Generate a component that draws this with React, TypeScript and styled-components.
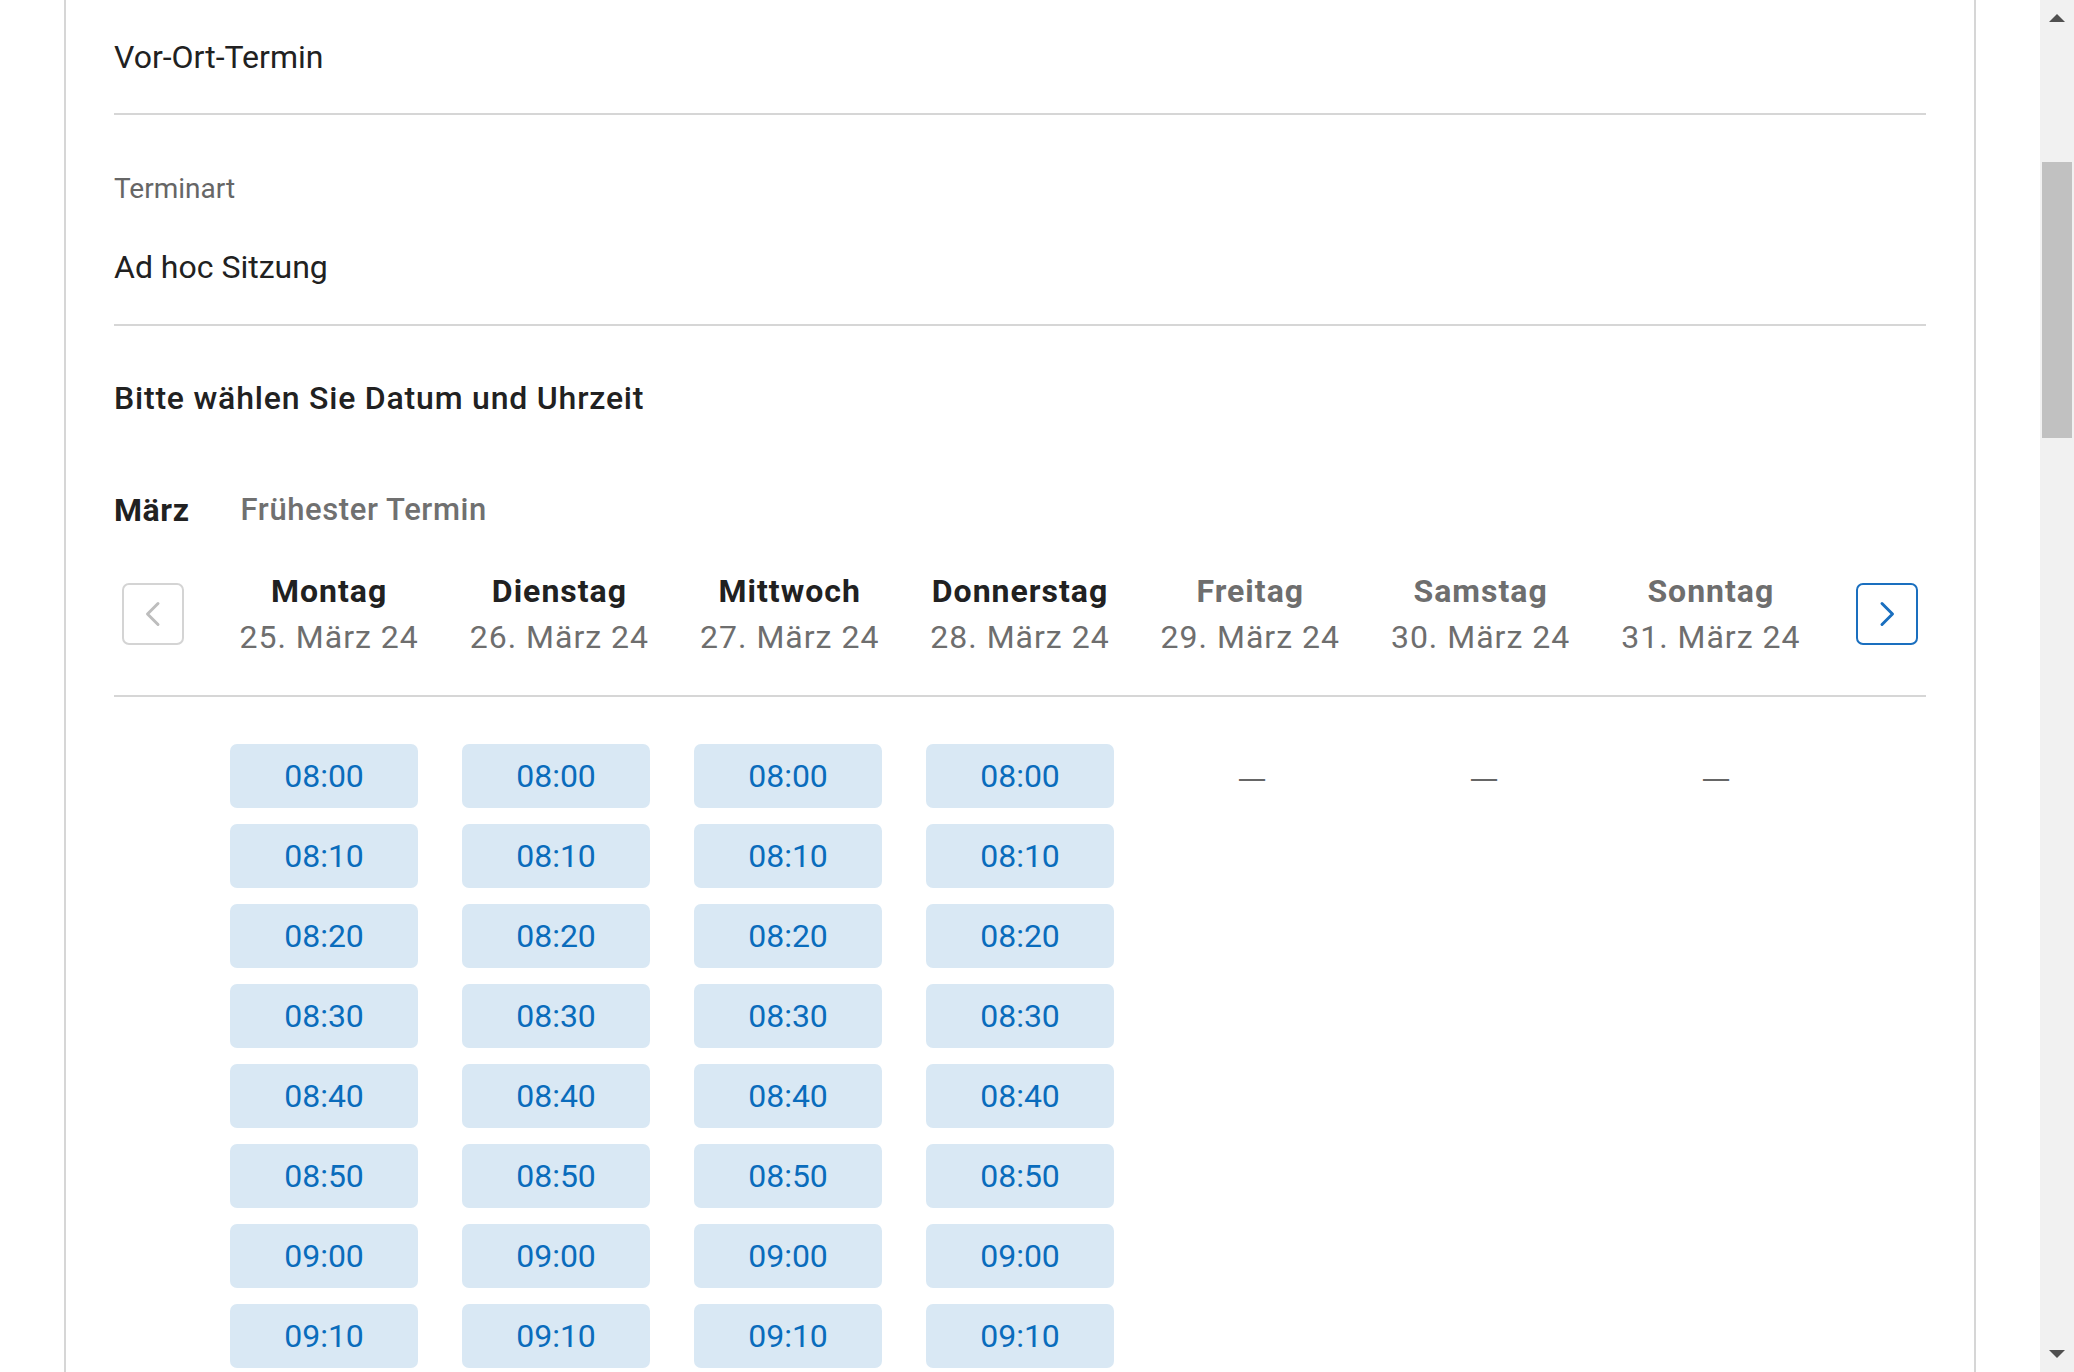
import React from 'react';
import styled, { createGlobalStyle } from 'styled-components';

const GlobalStyle = createGlobalStyle`
  html, body {
    margin: 0;
    padding: 0;
    height: 100%;
    overflow: hidden;
    background: #fff;
  }
  body {
    font-family: Roboto, "Liberation Sans", Arial, sans-serif;
    color: #212121;
  }
`;

const Page = styled.div`
  display: flex;
  height: 100vh;
  overflow: hidden;
`;

const Main = styled.div`
  flex: 1;
  overflow: hidden;
`;

const Card = styled.div`
  margin: 0 64px;
  padding: 0 48px 80px;
  border-left: 2px solid #d6d6d6;
  border-right: 2px solid #d6d6d6;
  min-height: 100vh;
`;

const Field = styled.div<{ $top: number; $bottom: number }>`
  padding-top: ${(p) => p.$top}px;
  padding-bottom: ${(p) => p.$bottom}px;
  border-bottom: 2px solid #d6d6d6;
`;

const FieldLabel = styled.div`
  font-size: 28px;
  line-height: 36px;
  color: #666;
  margin-bottom: 37px;
`;

const FieldValue = styled.div`
  font-size: 32px;
  line-height: 46px;
  color: #212121;
`;

const Heading = styled.h2`
  margin: 51px 0 0;
  font-size: 32px;
  line-height: 42px;
  font-weight: 500;
  letter-spacing: 0.8px;
  color: #212121;
`;

const Tabs = styled.div`
  display: flex;
  gap: 51px;
  margin-top: 68px;
`;

const Tab = styled.div<{ $active?: boolean }>`
  font-size: ${(p) => (p.$active ? 32 : 31)}px;
  line-height: 46px;
  letter-spacing: 0.6px;
  font-weight: ${(p) => (p.$active ? 700 : 500)};
  color: ${(p) => (p.$active ? '#212121' : '#707070')};
`;

const WeekHeader = styled.div`
  display: flex;
  align-items: center;
  margin-top: 35px;
  padding: 0 8px 35px;
  border-bottom: 2px solid #d6d6d6;
`;

const NavButton = styled.button<{ $active?: boolean }>`
  width: 62px;
  height: 62px;
  flex: 0 0 62px;
  display: flex;
  align-items: center;
  justify-content: center;
  padding: 0;
  background: #fff;
  border: 2px solid ${(p) => (p.$active ? '#1a6fbf' : '#d4d4d4')};
  border-radius: 7px;
  color: ${(p) => (p.$active ? '#1a6fbf' : '#bdbdbd')};
  cursor: pointer;
`;

const Days = styled.div`
  flex: 1;
  display: flex;
  margin: 0 30px;
`;

const Day = styled.div`
  flex: 1;
  text-align: center;
  font-size: 32px;
  line-height: 46px;
  letter-spacing: 1px;
`;

const DayName = styled.div<{ $muted?: boolean }>`
  font-weight: 700;
  color: ${(p) => (p.$muted ? '#6e6e6e' : '#212121')};
`;

const DayDate = styled.div`
  color: #6e6e6e;
`;

const SlotGrid = styled.div`
  display: grid;
  grid-template-columns: repeat(7, 1fr);
  padding: 47px 94px 0;
`;

const SlotColumn = styled.div`
  display: flex;
  flex-direction: column;
  align-items: center;
  gap: 16px;
`;

const Slot = styled.button`
  width: 188px;
  height: 64px;
  display: flex;
  align-items: center;
  justify-content: center;
  padding: 0;
  border: none;
  border-radius: 7px;
  background: #d9e8f4;
  color: #0a6cbc;
  font-family: Roboto, "Liberation Sans", Arial, sans-serif;
  font-size: 32px;
  cursor: pointer;
`;

const Empty = styled.div`
  box-sizing: border-box;
  height: 64px;
  padding-top: 10px;
  display: flex;
  align-items: center;
  justify-content: center;
  color: #666;
  font-size: 40px;
  font-weight: 300;
`;

const Scrollbar = styled.div`
  width: 34px;
  flex: 0 0 34px;
  display: flex;
  flex-direction: column;
  background: #f1f1f1;
`;

const ScrollArrow = styled.div`
  height: 36px;
  display: flex;
  align-items: center;
  justify-content: center;
`;

const ScrollTrack = styled.div`
  flex: 1;
  display: flex;
  flex-direction: column;
`;

const Thumb = styled.div`
  margin: 126px 2px 0;
  height: 276px;
  background: #c1c1c1;
`;

const Chevron = ({ dir }: { dir: 'left' | 'right' }) => (
  <svg width="18" height="26" viewBox="0 0 18 26" fill="none">
    <polyline
      points={dir === 'left' ? '14,2.5 3.5,13 14,23.5' : '4,2.5 14.5,13 4,23.5'}
      stroke="currentColor"
      strokeWidth="3"
      strokeLinecap="round"
      strokeLinejoin="round"
    />
  </svg>
);

const times = ['08:00', '08:10', '08:20', '08:30', '08:40', '08:50', '09:00', '09:10', '09:20', '09:30'];

const days = [
  { name: 'Montag', date: '25. März 24', open: true },
  { name: 'Dienstag', date: '26. März 24', open: true },
  { name: 'Mittwoch', date: '27. März 24', open: true },
  { name: 'Donnerstag', date: '28. März 24', open: true },
  { name: 'Freitag', date: '29. März 24', open: false },
  { name: 'Samstag', date: '30. März 24', open: false },
  { name: 'Sonntag', date: '31. März 24', open: false },
];

export default function App() {
  return (
    <Page>
      <GlobalStyle />
      <Main>
        <Card>
          <Field $top={34} $bottom={33}>
            <FieldValue>Vor-Ort-Termin</FieldValue>
          </Field>
          <Field $top={56} $bottom={34}>
            <FieldLabel>Terminart</FieldLabel>
            <FieldValue>Ad hoc Sitzung</FieldValue>
          </Field>

          <Heading>Bitte wählen Sie Datum und Uhrzeit</Heading>

          <Tabs>
            <Tab $active>März</Tab>
            <Tab>Frühester Termin</Tab>
          </Tabs>

          <WeekHeader>
            <NavButton aria-label="Vorherige Woche">
              <Chevron dir="left" />
            </NavButton>
            <Days>
              {days.map((d) => (
                <Day key={d.name}>
                  <DayName $muted={!d.open}>{d.name}</DayName>
                  <DayDate>{d.date}</DayDate>
                </Day>
              ))}
            </Days>
            <NavButton $active aria-label="Nächste Woche">
              <Chevron dir="right" />
            </NavButton>
          </WeekHeader>

          <SlotGrid>
            {days.map((d) => (
              <SlotColumn key={d.name}>
                {d.open ? times.map((t) => <Slot key={t}>{t}</Slot>) : <Empty>—</Empty>}
              </SlotColumn>
            ))}
          </SlotGrid>
        </Card>
      </Main>
      <Scrollbar>
        <ScrollArrow>
          <svg width="16" height="9" viewBox="0 0 16 9">
            <polygon points="8,0 16,8 0,8" fill="#505050" />
          </svg>
        </ScrollArrow>
        <ScrollTrack>
          <Thumb />
        </ScrollTrack>
        <ScrollArrow>
          <svg width="16" height="9" viewBox="0 0 16 9">
            <polygon points="0,0 16,0 8,8" fill="#505050" />
          </svg>
        </ScrollArrow>
      </Scrollbar>
    </Page>
  );
}
